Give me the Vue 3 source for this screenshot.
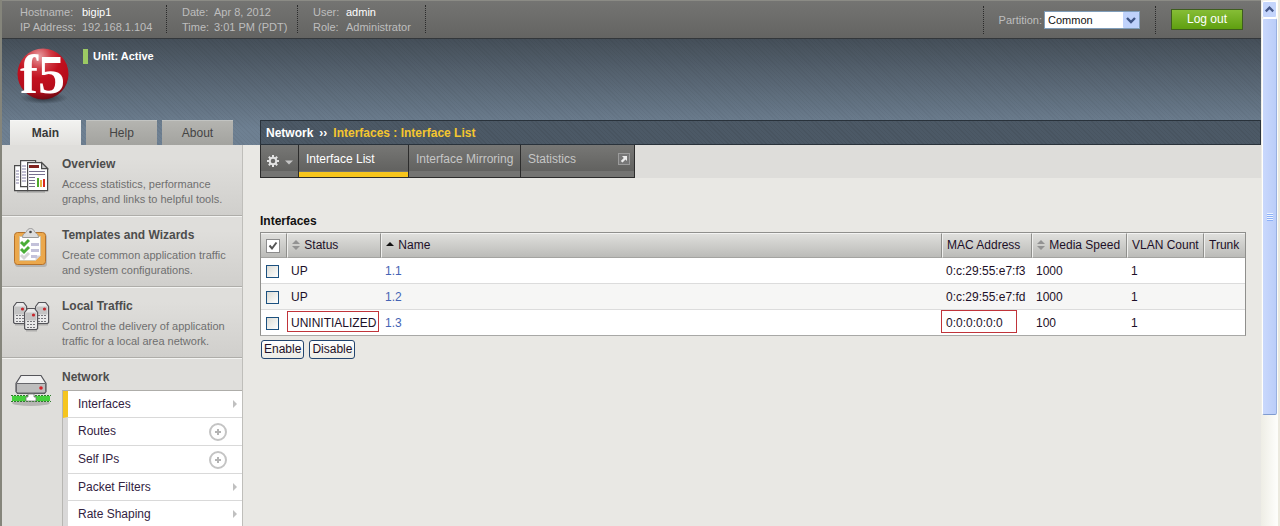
<script setup>
import { ref } from 'vue'

const groups = [
  { cls: 'g-host', rows: [['Hostname:', 'bigip1', true], ['IP Address:', '192.168.1.104', false]] },
  { cls: 'g-date', rows: [['Date:', 'Apr 8, 2012', false], ['Time:', '3:01 PM (PDT)', false]] },
  { cls: 'g-user', rows: [['User:', 'admin', true], ['Role:', 'Administrator', false]] },
]
const partition = ref('Common')
const modules = [
  { icon: 'overview', title: 'Overview', text: ['Access statistics, performance', 'graphs, and links to helpful tools.'] },
  { icon: 'wizard', title: 'Templates and Wizards', text: ['Create common application traffic', 'and system configurations.'] },
  { icon: 'traffic', title: 'Local Traffic', text: ['Control the delivery of application', 'traffic for a local area network.'] },
]
const submenu = [
  { label: 'Interfaces', active: true },
  { label: 'Routes', add: true },
  { label: 'Self IPs', add: true },
  { label: 'Packet Filters' },
  { label: 'Rate Shaping' },
]
const rows = [
  { status: 'UP', name: '1.1', mac: '0:c:29:55:e7:f3', speed: '1000', vlans: '1' },
  { status: 'UP', name: '1.2', mac: '0:c:29:55:e7:fd', speed: '1000', vlans: '1' },
  { status: 'UNINITIALIZED', name: '1.3', mac: '0:0:0:0:0:0', speed: '100', vlans: '1', flagged: true },
]
</script>

<template>
  <div class="window">
    <div class="page">
      <header class="topbar">
        <dl v-for="g in groups" :key="g.cls" class="group" :class="g.cls">
          <template v-for="r in g.rows" :key="r[0]">
            <dt>{{ r[0] }}</dt>
            <dd :class="{ strong: r[2] }">{{ r[1] }}</dd>
          </template>
        </dl>
        <div class="partition">
          <label for="partition">Partition:</label>
          <span class="select-wrap">
            <select id="partition" v-model="partition">
              <option>Common</option>
            </select>
            <svg class="drop" viewBox="0 0 16 16" width="16" height="16" aria-hidden="true">
              <rect width="16" height="16" rx="1" fill="#bfd2fb" />
              <path d="M4 6l4 4 4-4" fill="none" stroke="#3f5585" stroke-width="2.4" />
            </svg>
          </span>
        </div>
        <button type="button" class="logout">Log out</button>
      </header>

      <div class="banner">
        <div class="brand">
          <svg class="logo" viewBox="0 0 60 60" width="60" height="60" role="img" aria-label="f5">
            <defs>
              <radialGradient id="ball" cx="0.42" cy="0.16" r="0.85">
                <stop offset="0" stop-color="#e8a0a4" />
                <stop offset="0.28" stop-color="#cf3a44" />
                <stop offset="0.5" stop-color="#c3101f" />
                <stop offset="0.8" stop-color="#b50d1b" />
                <stop offset="1" stop-color="#6e0912" />
              </radialGradient>
              <radialGradient id="shade">
                <stop offset="0" stop-color="#1c232b" stop-opacity="0.8" />
                <stop offset="1" stop-color="#1c232b" stop-opacity="0" />
              </radialGradient>
            </defs>
            <ellipse cx="31" cy="51" rx="24" ry="6" fill="url(#shade)" />
            <circle cx="30" cy="27" r="25.5" fill="url(#ball)" />
            <text x="7" y="46" class="logo-text">f5</text>
          </svg>
          <p class="unit">Unit: Active</p>
        </div>
        <div class="banner-foot">
          <nav class="tabs">
            <a href="#" class="tab current">Main</a>
            <a href="#" class="tab">Help</a>
            <a href="#" class="tab">About</a>
          </nav>
          <div class="crumbs">
            <span>Network</span><span class="sep">››</span><span class="here">Interfaces : Interface List</span>
          </div>
        </div>
      </div>

      <div class="body">
        <aside class="sidebar">
          <a v-for="m in modules" :key="m.title" href="#" class="module">
            <svg v-if="m.icon === 'overview'" class="icon" viewBox="0 0 40 40" width="40" height="40">
              <path d="M6 35h28" stroke="#888" stroke-width="2" opacity="0.4" />
              <g fill="#fff" stroke="#4b4b4b" stroke-width="1.2">
                <path d="M3.6 8.600h13v25h-13z" />
                <path d="M9.600 3.600h15v26h-15z" />
                <path d="M16.600 5.600h14l6 6v22h-20z" />
                <path d="M30.600 5.600v6h6z" fill="#ccc" />
              </g>
              <path d="M5 14h3M5 17h3M5 20h3M5 23h3M5 26h3M11 9h4M11 12h4M11 15h4M11 18h4M11 21h4M11 24h4" stroke="#8580a5" />
              <path d="M18 9.500h10" stroke="#81231f" stroke-width="3" />
              <path d="M18 14.500h16M18 17.500h16M18 20.500h6M18 23.500h6M18 26.500h6M18 29.500h6" stroke="#77708f" />
              <path d="M27 21v9" stroke="#50a82e" stroke-width="2" />
              <path d="M30 23v7" stroke="#e7b33f" stroke-width="2" />
              <path d="M33 22v8" stroke="#d82920" stroke-width="2" />
            </svg>
            <svg v-else-if="m.icon === 'wizard'" class="icon" viewBox="0 0 40 40" width="40" height="40">
              <rect x="4" y="6" width="32" height="33" rx="3" fill="#777" opacity="0.35" />
              <rect x="3.500" y="4.500" width="31" height="32" rx="3" fill="#eba84c" stroke="#b5712a" />
              <path d="M8.500 8.500h21v19l-5 5h-16z" fill="#fff" stroke="#d4c6a8" />
              <path d="M29.500 27.500h-5v5z" fill="#d5d3de" />
              <path d="M11.500 9.500c0-4 3-4 4-6s2-3 4-3 3 1 4 3 4 2 4 6z" fill="#dcdcdc" stroke="#9a9a9a" />
              <circle cx="19.500" cy="4" r="1.300" fill="#444" />
              <path d="M20 16.500h8M20 22.500h8M20 28.500h6" stroke="#c3c1da" stroke-width="3" />
              <path d="M10 14l3 3 5-5M10 21l3 3 5-5" fill="none" stroke="#4aae37" stroke-width="3" />
              <path d="M10 27l3 3 5-5" fill="none" stroke="#d5d5d5" stroke-width="3" />
            </svg>
            <svg v-else class="icon" viewBox="0 0 40 40" width="40" height="40">
              <g v-for="p in [[2, 3], [24, 3], [13, 9]]" :key="p[0]" :transform="`translate(${p[0]} ${p[1]})`">
                <path d="M2 22h11" stroke="#777" stroke-width="3" opacity="0.4" />
                <path d="M.6 4.500l3-4h7l3 4v16l-1 1h-11l-1-1z" fill="#e9e9e9" stroke="#55555a" stroke-width="1.200" />
                <path d="M1.500 4.500h11v8h-11z" fill="#c4c4c4" />
                <circle cx="9.500" cy="7" r="1.600" fill="#c6262c" />
                <path d="M3 13.500h8M3 16.500h8M3 19.500h8" stroke="#77777c" stroke-dasharray="2 1" />
              </g>
            </svg>
            <span class="module-copy">
              <strong>{{ m.title }}</strong>
              <span v-for="line in m.text" :key="line">{{ line }}</span>
            </span>
          </a>
          <div class="module network">
            <svg class="icon" viewBox="0 0 40 40" width="40" height="40">
              <ellipse cx="20" cy="33" rx="19" ry="3" fill="#777" opacity="0.4" />
              <path d="M0 25.500h40M0 31.500h40" stroke="#2e7d2c" stroke-dasharray="2 1" />
              <path d="M1 28.500h38" stroke="#45d03c" stroke-width="5" />
              <path d="M10 5.500h20l5 8v8l-1.500 2h-27l-1.500-2v-8z" fill="#f1f1f1" stroke="#55555a" stroke-width="1.200" />
              <path d="M5.500 13.500h29v8l-1 1.500h-27l-1-1.500z" fill="#bdbdbd" stroke="#66666a" />
              <circle cx="30" cy="18" r="1.800" fill="#d5222a" />
              <path d="M17 24v3h-2v4h10v-4h-2v-3z" fill="#fff" stroke="#777" stroke-width="0.800" />
            </svg>
            <a href="#" class="network-title">Network</a>
          </div>
          <ul class="submenu">
            <li v-for="s in submenu" :key="s.label" :class="{ active: s.active, addable: s.add }">
              <a href="#">{{ s.label }}</a>
              <button v-if="s.add" type="button" class="add" :aria-label="`Create ${s.label}`">
                <svg viewBox="0 0 18 18" width="18" height="18">
                  <circle cx="9" cy="9" r="8" fill="none" stroke="#c4c4c4" stroke-width="2" />
                  <path d="M9 6v6M6 9h6" stroke="#b4b4b4" stroke-width="2" />
                </svg>
              </button>
              <svg v-else class="more" viewBox="0 0 4 8" width="4" height="8"><path d="M0 0l4 4-4 4z" fill="#c0c0c0" /></svg>
            </li>
          </ul>
        </aside>

        <main>
          <div class="toolbar">
            <div class="menu">
              <button type="button" class="gear" aria-label="Options">
                <svg viewBox="0 0 28 14" width="28" height="14">
                  <g stroke="#e2e2e2" fill="none">
                    <circle cx="7" cy="7" r="3.300" stroke-width="2" />
                    <path d="M7 1v2.500M7 10.500V13M1 7h2.500M10.500 7H13M2.800 2.800l1.700 1.700M9.500 9.500l1.700 1.700M2.800 11.200l1.700-1.700M9.500 4.500l1.700-1.700" stroke-width="2" />
                  </g>
                  <path d="M19 6.500h8l-4 4z" fill="#c4c4c4" />
                </svg>
              </button>
              <a href="#" class="item list current">Interface List</a>
              <a href="#" class="item mirror">Interface Mirroring</a>
              <a href="#" class="item stats">
                Statistics
                <svg viewBox="0 0 12 12" width="12" height="12">
                  <rect x="0.500" y="0.500" width="11" height="11" fill="#777" stroke="#9b9b9b" />
                  <path d="M4 3h5v5L7.500 6.500 4.500 9.500 2.800 8l3-3z" fill="#ececec" />
                </svg>
              </a>
            </div>
          </div>

          <section class="content">
            <h1>Interfaces</h1>
            <table>
              <colgroup>
                <col class="c-check"><col class="c-status"><col><col class="c-mac"><col class="c-speed"><col class="c-vlan"><col class="c-trunk">
              </colgroup>
              <thead>
                <tr>
                  <th class="check">
                    <button type="button" class="all" aria-label="Select all">
                      <svg viewBox="0 0 12 12" width="12" height="12"><path d="M2.500 5.500l2.500 3 4.500-6" fill="none" stroke="#555" stroke-width="2" /></svg>
                    </button>
                  </th>
                  <th>
                    <svg class="sort" viewBox="0 0 8 10" width="8" height="10"><path d="M0 4l4-4 4 4zM0 6h8l-4 4z" fill="#929292" /></svg>
                    Status
                  </th>
                  <th>
                    <svg class="sort" viewBox="0 0 8 10" width="8" height="10"><path d="M0 6l4-4 4 4z" fill="#111" /></svg>
                    Name
                  </th>
                  <th>MAC Address</th>
                  <th>
                    <svg class="sort" viewBox="0 0 8 10" width="8" height="10"><path d="M0 4l4-4 4 4zM0 6h8l-4 4z" fill="#929292" /></svg>
                    Media Speed
                  </th>
                  <th>VLAN Count</th>
                  <th>Trunk</th>
                </tr>
              </thead>
              <tbody>
                <tr v-for="r in rows" :key="r.name">
                  <td class="check"><input type="checkbox" :aria-label="`Select ${r.name}`"></td>
                  <td :class="{ 'flag-status': r.flagged }">{{ r.status }}</td>
                  <td><a href="#">{{ r.name }}</a></td>
                  <td :class="{ 'flag-mac': r.flagged }">{{ r.mac }}</td>
                  <td>{{ r.speed }}</td>
                  <td>{{ r.vlans }}</td>
                  <td></td>
                </tr>
              </tbody>
            </table>
            <div class="actions">
              <button type="button">Enable</button>
              <button type="button">Disable</button>
            </div>
          </section>
        </main>
      </div>
    </div>

    <div class="scrollbar" aria-hidden="true">
      <div class="scroll-up">
        <svg viewBox="0 0 14 15" width="14" height="15"><path d="M3 9.500l4-4 4 4" fill="none" stroke="#47598a" stroke-width="2.400" /></svg>
      </div>
      <div class="thumb"><i></i></div>
    </div>
  </div>
</template>

<style>
body { margin: 0; }
</style>

<style scoped>
* { box-sizing: border-box; }
.window {
  display: flex;
  height: 100vh;
  overflow: hidden;
  font: 12px/15px "Liberation Sans", Arial, sans-serif;
  color: #1d1028;
  background: #e9e8e4;
}
a { color: inherit; text-decoration: none; }
button, select, input { font: inherit; margin: 0; }
.page {
  flex: 1;
  min-width: 0;
  display: flex;
  flex-direction: column;
  border-left: 2px solid #85857b;
}

.topbar {
  flex: none;
  display: flex;
  height: 39px;
  padding: 5px 18px;
  font-size: 11px;
  color: #bebebe;
  background: linear-gradient(#747472, #646462);
  border-top: 1px solid #8b8b85;
  border-bottom: 1px solid #33373b;
}
.group {
  display: grid;
  grid-template-rows: 15px 15px;
  align-content: start;
  height: 28px;
  margin: -1px 15px 0 0;
  border-right: 1px dotted #2b2b2b;
}
.g-host { grid-template-columns: 62px 84px; }
.g-date { grid-template-columns: 32px 83px; }
.g-user { grid-template-columns: 33px 79px; }
dt, dd { margin: 0; white-space: nowrap; }
.strong { color: #fff; }
.partition {
  display: flex;
  align-items: center;
  gap: 2px;
  height: 28px;
  margin-left: auto;
  padding: 0 15px;
  border-left: 1px dotted #2b2b2b;
  border-right: 1px dotted #2b2b2b;
}
.select-wrap { position: relative; display: flex; }
select {
  appearance: none;
  width: 96px;
  height: 18px;
  padding: 0 20px 0 3px;
  color: #111;
  background: #fff;
  border: 1px solid #7f9db9;
  border-radius: 0;
}
.drop { position: absolute; top: 1px; right: 1px; pointer-events: none; }
.logout {
  width: 72px;
  height: 21px;
  margin: 3px 0 0 15px;
  padding: 0;
  font-size: 12px;
  color: #fff;
  background: linear-gradient(#86bd36, #5f9f10);
  border: 1px solid #3e5d1e;
}

.banner {
  flex: none;
  background:
    repeating-linear-gradient(45deg, rgba(0, 0, 0, 0.04) 0 1px, transparent 1px 3px),
    linear-gradient(#454f59, #6e8092 85%);
}
.brand { display: flex; height: 81px; padding: 8px 0 0 11px; }
.logo { overflow: visible; }
.logo-text { font: bold 54px "Liberation Serif", serif; fill: #fff; }
.unit {
  height: 15px;
  margin: 2px 0 0 10px;
  padding-left: 5px;
  font-size: 11px;
  font-weight: bold;
  color: #fff;
  border-left: 5px solid #9cca63;
}
.banner-foot { display: flex; height: 25px; }
.tabs { display: flex; flex: none; gap: 5px; width: 258px; padding-left: 8px; }
.tab {
  width: 71px;
  line-height: 25px;
  text-align: center;
  color: #444;
  background: linear-gradient(#b4b4b0, #a3a39f);
  border-top: 1px solid #c2c4c2;
}
.tab.current { font-weight: bold; color: #383838; background: linear-gradient(#f2f2f0, #e2e1de); border-color: #f7f7f6; }
.crumbs {
  flex: 1;
  display: flex;
  padding-left: 5px;
  font-weight: bold;
  line-height: 24px;
  color: #fff;
  background: repeating-linear-gradient(45deg, rgba(0, 0, 0, 0.06) 0 1px, transparent 1px 3px), #4c5966;
  border: 1px solid #29323b;
}
.sep { margin: 0 6px; }
.here { color: #f4c62f; }

.body { flex: 1; display: flex; min-height: 0; }
.sidebar { flex: none; width: 241px; background: #dfdedb; border-right: 1px solid #bfbeba; }
.module {
  display: flex;
  height: 71px;
  padding: 12px 0 0 9px;
  gap: 11px;
  background: linear-gradient(#dfdedb 20%, #d0cfcc);
  border-bottom: 1px solid #aeada9;
}
.module + .module { padding-top: 11px; border-top: 1px solid #f3f3f1; }
.icon { flex: none; }
.module-copy { display: flex; flex-direction: column; font-size: 11px; color: #6f6f6f; white-space: nowrap; }
.module-copy strong { margin-bottom: 5px; font-size: 12px; color: #4d4d4d; }
.network { height: 32px; background: none; border-bottom: 0; }
.network-title { font-weight: bold; color: #4d4d4d; }
.submenu {
  position: relative;
  width: 180px;
  margin: 0 0 0 60px;
  padding: 0;
  list-style: none;
  border-top: 1px solid #aeada9;
  border-left: 1px solid #b7b6b2;
}
.submenu li {
  display: flex;
  align-items: center;
  justify-content: space-between;
  height: 27px;
  padding: 0 5px 0 10px;
  background: #fff;
  border-bottom: 1px solid #d9d9d9;
  border-left: 5px solid #d9d8d8;
}
.submenu li.active { border-left-color: #f5c51f; }
.submenu li.addable { height: 28px; padding-right: 15px; }
.submenu a { color: #33233f; }
.add { display: flex; padding: 0; background: none; border: 0; }

main { flex: 1; min-width: 0; }
.toolbar { height: 33px; margin-left: 17px; background: #dedddA; }
.menu { display: inline-flex; height: 33px; border: 1px solid #2c2c2c; border-top: 0; background: linear-gradient(#777775, #626260 80%, #747472 82%); }
.gear { display: flex; align-items: center; width: 38px; padding: 0 0 0 5px; background: none; border: 0; border-right: 1px solid #2c2c2c; }
.item { padding: 7px 6px 0 7px; color: #c6c6c6; border-right: 1px solid #2c2c2c; white-space: nowrap; }
.list { width: 110px; }
.list.current { color: #fff; box-shadow: inset 0 -5px #f7c51c; }
.mirror { width: 112px; }
.stats { display: flex; align-items: flex-start; justify-content: space-between; width: 113px; padding-right: 4px; border-right: 0; }
.stats svg { margin-top: 1px; }

.content { padding: 36px 15px 0 17px; }
h1 { margin: 0 0 3px; font-size: 12px; line-height: 15px; color: #111; }
table {
  width: 100%;
  table-layout: fixed;
  border-collapse: separate;
  border-spacing: 0;
  background: #fff;
  border: 1px solid #8f8f8c;
  border-bottom-color: #a8a8a6;
}
.c-check { width: 26px; }
.c-status { width: 94px; }
.c-mac { width: 90px; }
.c-speed { width: 95px; }
.c-vlan { width: 77px; }
.c-trunk { width: 41px; }
th {
  height: 25px;
  padding: 0 0 0 4px;
  font-weight: normal;
  text-align: left;
  white-space: nowrap;
  background: linear-gradient(#dfdfdc, #bbbbb8);
  border-top: 1px solid #f3f3f2;
  border-left: 1px solid #f0f0ee;
  border-right: 1px solid #8f8f8c;
  border-bottom: 1px solid #a3a3a0;
}
th:first-child { border-left: 0; }
th:last-child { border-right: 0; }
.sort { margin-right: 1px; vertical-align: -1px; }
td { position: relative; height: 26px; padding: 1px 0 0 4px; white-space: nowrap; border-bottom: 1px solid #dcdcdc; }
tbody tr:nth-child(2) td { background: #f6f6f5; }
tbody tr:last-child td { height: 25px; border-bottom: 0; }
tbody a { color: #4464b4; }
.check { padding-left: 5px; }
td input {
  appearance: none;
  display: block;
  width: 13px;
  height: 13px;
  background: linear-gradient(135deg, #dcdcd5, #fff);
  border: 1px solid #1c5180;
}
.all { display: flex; width: 14px; height: 14px; padding: 0; background: #fff; border: 1px solid #8c8c8c; }
.flag-status::after, .flag-mac::after { content: ""; position: absolute; border: 1px solid #c0343a; }
.flag-status::after { inset: 1px 2px 3px 0; }
.flag-mac::after { inset: 0 15px 2px -1px; }
.actions { display: flex; gap: 5px; margin: 4px 0 0 1px; }
.actions button {
  height: 19px;
  padding: 0 2px;
  color: #1d1028;
  background: linear-gradient(#fff, #ecebe5);
  border: 1px solid #23456f;
  border-radius: 3px;
}

.scrollbar {
  flex: none;
  width: 19px;
  background: linear-gradient(90deg, #eeede5, #fdfdfa 90%);
  border-right: 2px solid #eceadf;
}
.scroll-up { display: flex; height: 17px; margin: 1px 1px 0; background: #c4d5fc; border: 1px solid #fff; border-radius: 2px; }
.thumb {
  display: flex;
  align-items: center;
  justify-content: center;
  height: 397px;
  margin: 0 1px;
  background: linear-gradient(90deg, #c9d8fc, #bbcdf9);
  border: 1px solid #fff;
  border-right-color: #98b0e0;
  border-bottom-color: #7f9bd0;
  border-radius: 2px;
}
.thumb i { width: 6px; height: 8px; background: repeating-linear-gradient(#eef4fe 0 1px, #8cb0f8 1px 2px); }
</style>
